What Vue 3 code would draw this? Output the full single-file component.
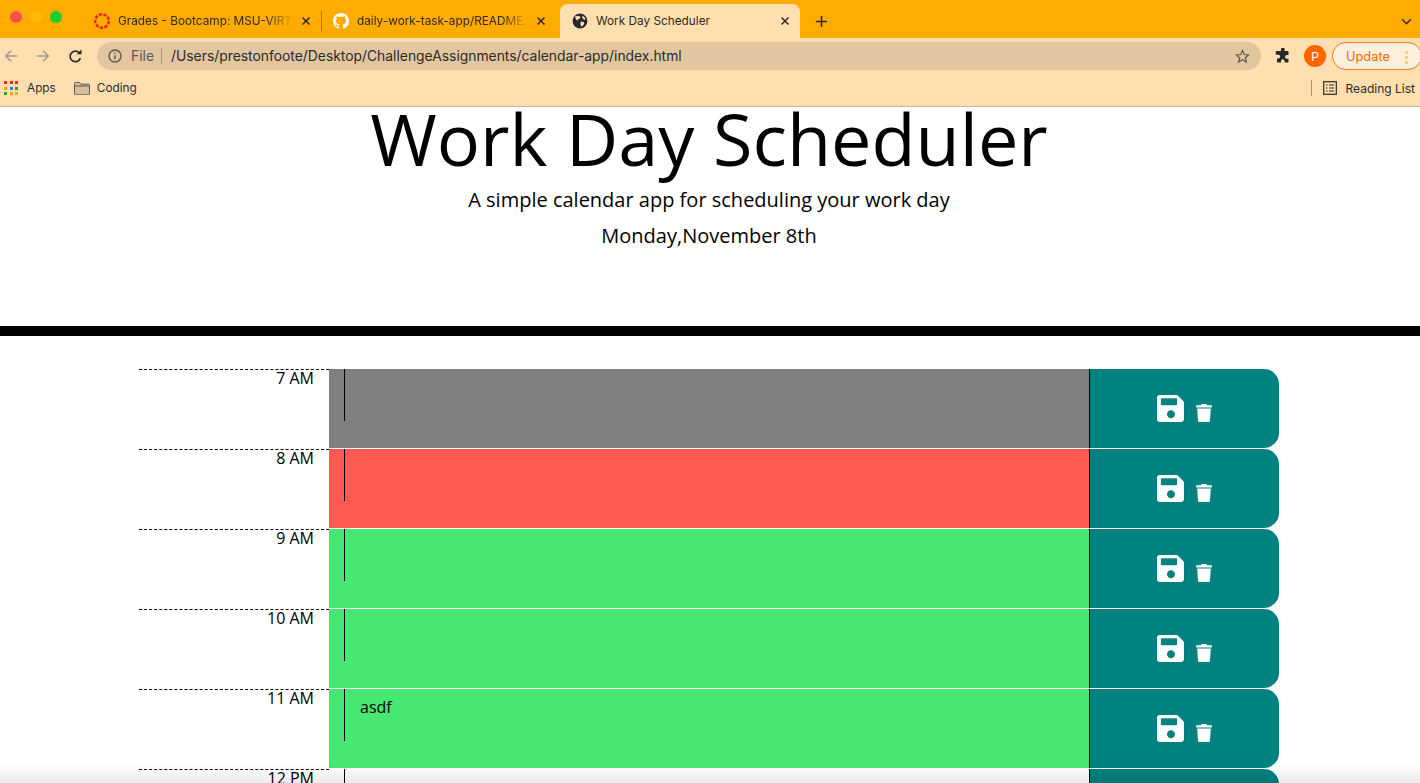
<template>
  <div class="window">
    <div class="tabstrip">
      <div class="lights">
        <span class="light red"></span>
        <span class="light yellow"></span>
        <span class="light green"></span>
      </div>
      <div class="tab first">
        <svg class="favicon" viewBox="0 0 16 16"><circle cx="8" cy="8" r="6.8" fill="none" stroke="#e8251b" stroke-width="2.4" stroke-dasharray="3.4 1.35" /></svg>
        <span class="tab-title">Grades - Bootcamp: MSU-VIRT</span>
        <svg class="close" viewBox="0 0 10 10"><path d="M1.5 1.5l7 7M8.5 1.5l-7 7" /></svg>
      </div>
      <div class="tab second">
        <svg class="favicon" viewBox="0 0 16 16"><path fill="#fff" d="M8 0C3.58 0 0 3.58 0 8c0 3.54 2.29 6.53 5.47 7.59.4.07.55-.17.55-.38 0-.19-.01-.82-.01-1.49-2.01.37-2.53-.49-2.69-.94-.09-.23-.48-.94-.82-1.13-.28-.15-.68-.52-.01-.53.63-.01 1.08.58 1.23.82.72 1.21 1.87.87 2.33.66.07-.52.28-.87.51-1.07-1.78-.2-3.64-.89-3.64-3.95 0-.87.31-1.59.82-2.15-.08-.2-.36-1.02.08-2.12 0 0 .67-.21 2.2.82.64-.18 1.32-.27 2-.27s1.36.09 2 .27c1.53-1.04 2.2-.82 2.2-.82.44 1.1.16 1.92.08 2.12.51.56.82 1.27.82 2.15 0 3.07-1.87 3.75-3.65 3.95.29.25.54.73.54 1.48 0 1.07-.01 1.93-.01 2.2 0 .21.15.46.55.38A8.01 8.01 0 0016 8c0-4.42-3.58-8-8-8z" /></svg>
        <span class="tab-title">daily-work-task-app/README.md</span>
        <svg class="close" viewBox="0 0 10 10"><path d="M1.5 1.5l7 7M8.5 1.5l-7 7" /></svg>
      </div>
      <div class="tab active">
        <svg class="favicon" viewBox="0 0 16 16">
          <circle cx="8" cy="8" r="7.4" fill="#26262b" />
          <path fill="#ffdfb0" d="M3 3.6l3.2-.9 2.2 1-.3 1.8-1.9.4-.5 1.6-1.6-.7zM8.7 8.4l3 .5.6 1.8-1.8 2.2-1.3.5-.8-2.5zM10.6 2.6l2.4 2.2.6 2-1.8-.4-1.6-1.6z" />
        </svg>
        <span class="tab-title">Work Day Scheduler</span>
        <svg class="close" viewBox="0 0 10 10"><path d="M1.5 1.5l7 7M8.5 1.5l-7 7" /></svg>
      </div>
      <svg class="new-tab" viewBox="0 0 14 14"><path d="M7 1v12M1 7h12" /></svg>
      <svg class="tab-menu" viewBox="0 0 12 8"><path d="M1 1.5l5 5 5-5" /></svg>
    </div>

    <div class="toolbar">
      <svg class="nav dim" viewBox="0 0 16 16"><path d="M15 8H2M8 2L2 8l6 6" /></svg>
      <svg class="nav dim" viewBox="0 0 16 16"><path d="M1 8h13M8 2l6 6-6 6" /></svg>
      <svg class="nav reload" viewBox="0 0 16 16"><path d="M13.2 9.5A5.6 5.6 0 1 1 12 4.2" /><path class="solid" d="M9.2 5.6h5.2V.4z" /></svg>
      <div class="omnibox">
        <svg class="info" viewBox="0 0 14 14"><circle cx="7" cy="7" r="6" /><path d="M7 6.2v4" /><path d="M7 3.4v1.4" /></svg>
        <span class="scheme">File</span>
        <span class="url">/Users/prestonfoote/Desktop/ChallengeAssignments/calendar-app/index.html</span>
        <svg class="star" viewBox="0 0 16 16"><path d="M8 1.6l1.9 4.3 4.6.4-3.5 3 1.1 4.6L8 11.5l-4.1 2.4L5 9.3l-3.5-3 4.6-.4z" /></svg>
      </div>
      <svg class="puzzle" viewBox="0 0 16 16"><path d="M6 1.5a1.8 1.8 0 0 1 3.6 0V3h3.2a.7.7 0 0 1 .7.7V7H12a1.9 1.9 0 0 0 0 3.8h1.5v3a.7.7 0 0 1-.7.7H9.6V13a1.8 1.8 0 0 0-3.6 0v1.5H2.700a.7.7 0 0 1-.7-.7v-3.300h1.300a1.900 1.900 0 0 0 0-3.800H.8V3.700A.7.7 0 0 1 1.500 3H6z" /></svg>
      <span class="avatar">P</span>
      <div class="update">
        <span>Update</span>
        <i class="dots"><b></b><b></b><b></b></i>
      </div>
    </div>

    <div class="bookmarks">
      <span class="apps"><i v-for="(c, i) in appDots" :key="i" :style="{ background: c }"></i></span>
      <span class="mark">Apps</span>
      <svg class="folder" viewBox="0 0 16 13"><path d="M.5 11.800V1.500a1 1 0 0 1 1-1h4l1.500 1.700h7.500a1 1 0 0 1 1 1v8.600a1 1 0 0 1-1 1h-13a1 1 0 0 1-1-1z" /><path d="M.5 4h15" /></svg>
      <span class="mark">Coding</span>
      <span class="divider"></span>
      <svg class="list" viewBox="0 0 14 14"><rect x=".7" y=".7" width="12.600" height="12.600" /><path d="M3 4h1.500M6 4h5M3 7h1.500M6 7h5M3 10h1.500M6 10h5" /></svg>
      <span class="mark reading">Reading List</span>
    </div>

    <div class="page">
      <header class="jumbotron">
        <h1>Work Day Scheduler</h1>
        <p class="lead">A simple calendar app for scheduling your work day</p>
        <p class="today">Monday,November 8th</p>
      </header>

      <div class="planner">
        <div v-for="row in rows" :key="row.hour" class="time-block">
          <div class="hour">{{ row.hour }}</div>
          <div class="slot" :class="row.state">
            <textarea class="entry" :value="row.text" spellcheck="false"></textarea>
          </div>
          <div class="actions">
            <svg class="save" viewBox="0 0 448 512"><path fill-rule="evenodd" d="M433.900 129.900l-83.900-83.900A48 48 0 0 0 316.100 32H48C21.500 32 0 53.500 0 80v352c0 26.500 21.500 48 48 48h352c26.500 0 48-21.500 48-48V163.900a48 48 0 0 0-14.100-34zM232 418c-36.500 0-66-29.500-66-66s29.500-66 66-66 66 29.500 66 66-29.500 66-66 66zM332 188c0 6.600-5.400 12-12 12H76c-6.600 0-12-5.400-12-12V96c0-6.600 5.400-12 12-12h244c6.600 0 12 5.400 12 12z" /></svg>
            <svg class="trash" viewBox="0 0 448 512"><path d="M432 32H312l-9.400-18.700A24 24 0 0 0 281.100 0H166.800a23.700 23.700 0 0 0-21.400 13.300L136 32H16A16 16 0 0 0 0 48v32a16 16 0 0 0 16 16h416a16 16 0 0 0 16-16V48a16 16 0 0 0-16-16zM53.200 467a48 48 0 0 0 47.900 45h245.800a48 48 0 0 0 47.900-45L416 128H32z" /></svg>
          </div>
        </div>
      </div>
      <div class="dock-shade"></div>
    </div>
  </div>
</template>

<script setup>
const appDots = [
  '#e8291c', '#e8291c', '#e8291c',
  '#f5a800', '#2a7de1', '#2a9d3c',
  '#2a9d3c', '#f5a800', '#f5a800',
]

const rows = [
  { hour: '7 AM', state: 'past', text: '' },
  { hour: '8 AM', state: 'present', text: '' },
  { hour: '9 AM', state: 'future', text: '' },
  { hour: '10 AM', state: 'future', text: '' },
  { hour: '11 AM', state: 'future', text: 'asdf' },
  { hour: '12 PM', state: '', text: '' },
]
</script>

<style>
html,
body {
  overflow: hidden;
  background: #fff;
}
</style>

<style scoped>
.window {
  height: 783px;
  overflow: hidden;
  display: flex;
  flex-direction: column;
  font-family: Inter, "Liberation Sans", sans-serif;
}

/* tab strip */
.tabstrip {
  height: 38px;
  flex: none;
  display: flex;
  align-items: flex-end;
  background: #ffab00;
  position: relative;
}

.lights {
  display: flex;
  gap: 8px;
  padding: 0 22px 0 10px;
  align-self: flex-start;
  margin-top: 11px;
}

.light {
  width: 12px;
  height: 12px;
  border-radius: 50%;
}

.light.red { background: #fb5050; }
.light.yellow { background: #fdbc00; }
.light.green { background: #14cf2e; }

.tab {
  height: 34px;
  display: flex;
  align-items: center;
  font-size: 11.8px;
  color: #33291a;
  flex: none;
  box-sizing: border-box;
}

.tab.first {
  width: 237px;
  padding: 0 10px 1px 10px;
}

.tab.second {
  width: 239px;
  padding: 0 14px 1px 12px;
  position: relative;
}

.tab.second::before {
  content: "";
  position: absolute;
  left: 0;
  top: 7px;
  height: 20px;
  width: 1px;
  background: #a8772a;
}

.tab.active {
  width: 240px;
  padding: 0 10px 1px 12px;
  background: #ffdfb0;
  border-radius: 8px 8px 0 0;
}

.favicon {
  width: 16px;
  height: 16px;
  flex: none;
  margin-right: 8px;
}

.tab-title {
  flex: 1;
  white-space: nowrap;
  overflow: hidden;
  -webkit-mask-image: linear-gradient(to right, #000 85%, transparent);
  mask-image: linear-gradient(to right, #000 85%, transparent);
}

.tab.active .tab-title {
  -webkit-mask-image: none;
  mask-image: none;
}

.close {
  width: 10px;
  height: 10px;
  flex: none;
  margin-left: 8px;
  fill: none;
  stroke: #2c2a28;
  stroke-width: 1.5;
}

.new-tab {
  width: 13px;
  height: 13px;
  margin: 0 0 10px 15px;
  fill: none;
  stroke: #2c2a28;
  stroke-width: 1.7;
}

.tab-menu {
  position: absolute;
  right: 8px;
  top: 18px;
  width: 11px;
  height: 7px;
  fill: none;
  stroke: #2c2a28;
  stroke-width: 1.6;
}

/* address bar */
.toolbar {
  height: 38px;
  flex: none;
  display: flex;
  align-items: center;
  background: #ffdfb0;
  padding: 0 0 2px 4px;
  box-sizing: border-box;
}

.nav {
  width: 14px;
  height: 14px;
  margin-right: 18px;
  fill: none;
  stroke: #a3998a;
  stroke-width: 1.8;
  flex: none;
}

.nav.reload {
  margin-right: 14px;
  width: 15px;
  height: 15px;
  stroke: #2c2a28;
}

.nav .solid {
  fill: #2c2a28;
  stroke: none;
}

.omnibox {
  width: 1164px;
  height: 28px;
  flex: none;
  display: flex;
  align-items: center;
  border-radius: 14px;
  background: #e2c6a0;
  padding: 0 11px;
  box-sizing: border-box;
  font-size: 13.86px;
  color: #2c2a28;
}

.info {
  width: 14px;
  height: 14px;
  flex: none;
  fill: none;
  stroke: #5d5850;
  stroke-width: 1.4;
}

.scheme {
  margin-left: 9px;
  padding-right: 7px;
  color: #5d5850;
  border-right: 1px solid #a8967a;
  line-height: 16px;
}

.url {
  margin-left: 9px;
  flex: 1;
  white-space: nowrap;
}

.star {
  width: 15px;
  height: 15px;
  flex: none;
  fill: none;
  stroke: #5d5850;
  stroke-width: 1.3;
}

.puzzle {
  width: 16px;
  height: 16px;
  margin-left: 14px;
  flex: none;
  fill: #26262b;
}

.avatar {
  width: 22px;
  height: 22px;
  margin-left: 13px;
  flex: none;
  border-radius: 50%;
  background: #ff6600;
  color: #fff;
  font-size: 12px;
  display: flex;
  align-items: center;
  justify-content: center;
}

.update {
  width: 90px;
  height: 28px;
  margin-left: 6px;
  flex: none;
  box-sizing: border-box;
  border: 1px solid #f07a1a;
  border-radius: 14px;
  background: #ffefdc;
  color: #f56a00;
  font-size: 12.8px;
  display: flex;
  align-items: center;
  padding-left: 13px;
  position: relative;
}

.dots {
  position: absolute;
  left: 72px;
  top: 8px;
  display: flex;
  flex-direction: column;
  gap: 2px;
}

.dots b {
  width: 3px;
  height: 3px;
  border-radius: 50%;
  background: #ffc94d;
}

/* bookmarks bar */
.bookmarks {
  height: 31px;
  flex: none;
  display: flex;
  align-items: center;
  padding: 0 5px 6px 4px;
  background: #ffdfb0;
  border-bottom: 1px solid #c9b596;
  box-sizing: border-box;
  font-size: 11.8px;
  color: #2c2a28;
}

.apps {
  width: 14px;
  height: 14px;
  flex: none;
  display: grid;
  grid-template-columns: repeat(3, 3px);
  grid-auto-rows: 3px;
  gap: 2.5px;
}

.apps i {
  display: block;
}

.mark {
  margin-left: 9px;
  white-space: nowrap;
}

.folder {
  width: 16px;
  height: 13px;
  margin: 0 -2px 0 18px;
  flex: none;
  fill: #d6bf9c;
  stroke: #5d5850;
  stroke-width: 1;
}

.divider {
  width: 1px;
  height: 16px;
  margin-left: auto;
  background: #a8967a;
}

.list {
  width: 14px;
  height: 14px;
  margin-left: 11px;
  flex: none;
  fill: none;
  stroke: #2c2a28;
  stroke-width: 1.2;
}

.mark.reading {
  margin-left: 9px;
  font-size: 12px;
}

/* page */
.page {
  flex: 1;
  min-height: 0;
  position: relative;
  overflow: hidden;
  font-family: "Open Sans", sans-serif;
  color: #000;
}

.jumbotron {
  height: 229px;
  box-sizing: border-box;
  border-bottom: 10px solid #000;
  padding-right: 2px;
  text-align: center;
}

h1 {
  margin: 0;
  font-size: 72px;
  font-weight: 400;
  line-height: 63px;
}

.lead {
  margin: 15px 0 0;
  font-size: 20px;
  line-height: 30px;
}

.today {
  margin: 6px 0 0;
  font-size: 20px;
  line-height: 30px;
}

.planner {
  padding: 33px 0 0 139px;
}

.time-block {
  display: grid;
  grid-template-columns: 190px 760px 190px;
  height: 80px;
}

.hour {
  border-top: 1px dashed #000;
  padding-right: 15px;
  text-align: right;
  font-size: 16px;
  line-height: 17px;
}

.slot {
  height: 79px;
}

.past { background: #808080; }
.present { background: #ff5a52; }
.future { background: #46e872; }

.entry {
  display: block;
  width: 745px;
  height: 52px;
  margin-left: 15px;
  padding: 6px 15px;
  box-sizing: border-box;
  background: transparent;
  border: 0;
  border-left: 1px solid #000;
  outline: 0;
  resize: none;
  overflow: hidden;
  font: 16px/24px "Open Sans", sans-serif;
  color: #000;
}

.actions {
  height: 79px;
  box-sizing: border-box;
  border-left: 1px solid #000;
  border-radius: 0 15px 15px 0;
  background: #008281;
  display: flex;
  align-items: center;
  justify-content: center;
  gap: 12px;
}

.save {
  width: 27px;
  height: 31px;
  fill: #fff;
}

.trash {
  width: 16px;
  height: 18px;
  margin-top: 8px;
  fill: #fff;
}

.dock-shade {
  position: absolute;
  left: 0;
  right: 0;
  bottom: 0;
  height: 20px;
  background: linear-gradient(to bottom, rgba(0, 0, 0, 0), rgba(0, 0, 0, 0.08));
  pointer-events: none;
}
</style>
